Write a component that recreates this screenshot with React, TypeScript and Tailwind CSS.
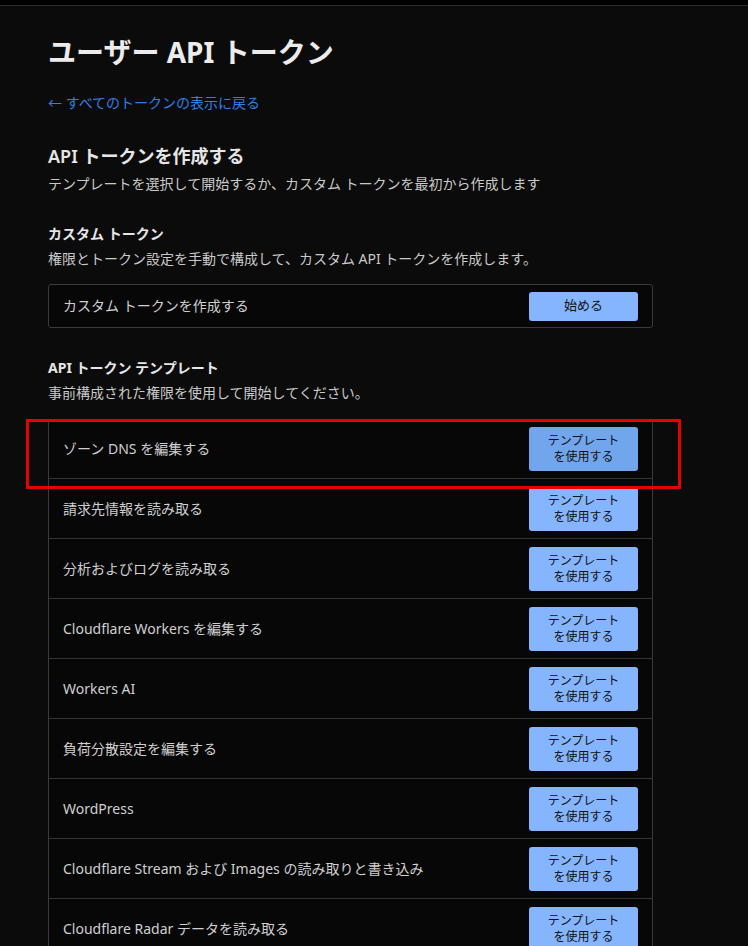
import React from "react";

const templates = [
  "ゾーン DNS を編集する",
  "請求先情報を読み取る",
  "分析およびログを読み取る",
  "Cloudflare Workers を編集する",
  "Workers AI",
  "負荷分散設定を編集する",
  "WordPress",
  "Cloudflare Stream および Images の読み取りと書き込み",
  "Cloudflare Radar データを読み取る",
];

const App = () => {
  return (
    <div
      className="relative h-[946px] overflow-hidden bg-[#0b0b0b] text-[#d4d4d4]"
      style={{ fontFamily: '"Noto Sans", "Noto Sans CJK JP", sans-serif' }}
    >
      <div className="h-[5px] bg-black border-b border-[#2c2c2c] box-content" />
      <div className="pl-12 w-[653px]">
        <h1 className="mt-[26px] text-[28px] leading-[40px] font-bold text-[#ececec]">
          ユーザー API トークン
        </h1>
        <a className="mt-[21px] block text-sm leading-5 text-[#2f7fe6]">
          ← すべてのトークンの表示に戻る
        </a>

        <h2 className="mt-[29px] text-lg leading-7 font-semibold text-[#e6e6e6]">
          API トークンを作成する
        </h2>
        <p className="mt-[4px] text-sm leading-5 text-[#c9c9c9]">
          テンプレートを選択して開始するか、カスタム トークンを最初から作成します
        </p>

        <h3 className="mt-[30px] text-sm leading-5 font-bold text-[#e6e6e6]">
          カスタム トークン
        </h3>
        <p className="mt-[5px] text-sm leading-5 text-[#c9c9c9]">
          権限とトークン設定を手動で構成して、カスタム API トークンを作成します。
        </p>
        <div className="mt-[15px] h-[44px] flex items-center justify-between border border-[#3a3a3a] rounded-[3px] bg-[#070707] pl-[14px] pr-[14px]">
          <span className="text-sm text-[#cfcfcf]">カスタム トークンを作成する</span>
          <button className="w-[109px] h-[29px] rounded-[3px] bg-[#86b5ff] text-[13px] text-[#111]">
            始める
          </button>
        </div>

        <h3 className="mt-[30px] text-sm leading-5 font-bold text-[#e6e6e6]">
          API トークン テンプレート
        </h3>
        <p className="mt-[5px] text-sm leading-5 text-[#c9c9c9]">
          事前構成された権限を使用して開始してください。
        </p>

        <div className="mt-[16px] border-x border-[#3a3a3a] bg-[#070707]">
          {templates.map((t, i) => (
            <div
              key={t}
              className="h-[60px] flex items-center justify-between pl-[14px] pr-[14px] border-b border-[#333]"
            >
              <span className="text-sm text-[#cfcfcf]">{t}</span>
              <button
                className={`w-[109px] h-[44px] rounded-[3px] text-[12px] leading-[16px] text-[#111] ${
                  i === 0 ? "bg-[#72a6ec]" : "bg-[#86b5ff]"
                }`}
              >
                テンプレート
                <br />
                を使用する
              </button>
            </div>
          ))}
        </div>
      </div>

      <div className="absolute left-[26px] top-[419px] w-[655px] h-[70px] border-[3px] border-[#e80000] pointer-events-none" />
    </div>
  );
};

export default App;
